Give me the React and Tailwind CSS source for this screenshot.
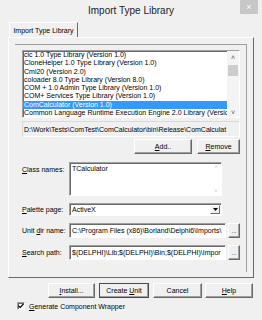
import React from 'react';

const libraries = [
  'cic 1.0 Type Library (Version 1.0)',
  'CloneHelper 1.0 Type Library (Version 1.0)',
  'Cmi20 (Version 2.0)',
  'coloader 8.0 Type Library (Version 8.0)',
  'COM + 1.0 Admin Type Library (Version 1.0)',
  'COM+ Services Type Library (Version 1.0)',
  'ComCalculator (Version 1.0)',
  'Common Language Runtime Execution Engine 2.0 Library (Versio',
];

const raised =
  'border border-t-white border-l-white border-r-[#696969] border-b-[#696969] shadow-[inset_-1px_-1px_0_#a0a0a0] bg-[#f0f0f0]';
const sunken =
  'border border-t-[#a0a0a0] border-l-[#a0a0a0] border-r-white border-b-white shadow-[inset_1px_1px_0_#696969]';

function Button({ className = '', children }) {
  return (
    <button className={`${raised} h-[15px] flex items-center justify-center leading-none ${className}`}>
      {children}
    </button>
  );
}

function Label({ children }) {
  return <div className="w-[47px] shrink-0 leading-none">{children}</div>;
}

export default function App() {
  return (
    <div className="w-[262px] h-[320px] bg-[#f0f0f0] overflow-hidden font-['Liberation_Sans',Arial,sans-serif] text-[7px] text-black">
      {/* Title bar */}
      <div className="relative h-[20px] flex items-center justify-center">
        <span className="text-[10px] text-[#222]">Import Type Library</span>
        <div className="absolute right-[4px] top-0 w-[18px] h-[14px] bg-[#c7c7c7] flex items-center justify-center text-white text-[9px] leading-none">
          ×
        </div>
      </div>

      {/* Tab header */}
      <div className="mt-[2px] pl-[9px] h-[15px] flex">
        <div className="w-[69px] h-full border-l border-t border-r border-l-white border-t-white border-r-[#696969] flex items-center justify-center leading-none">
          Import Type Library
        </div>
      </div>

      {/* Tab panel */}
      <div className="ml-[8px] w-[246px] h-[241px] border border-t-white border-l-white border-r-[#696969] border-b-[#696969]">
        <div className="ml-[6px] mt-[6px] w-[232px] h-[228px] border-t border-r border-[#a0a0a0] pl-[7px] pr-[6px] pt-[5px]">
          {/* Library list */}
          <div className={`${sunken} h-[68px] bg-white flex overflow-hidden`}>
            <div className="flex-1 overflow-hidden">
              {libraries.map((name) => (
                <div
                  key={name}
                  className={`h-[8.25px] leading-[8.25px] pl-[1px] whitespace-nowrap ${
                    name === 'ComCalculator (Version 1.0)' ? 'bg-[#3399ff] text-white' : ''
                  }`}
                >
                  {name}
                </div>
              ))}
            </div>
            <div className="w-[12px] bg-[#f4f4f4] flex flex-col items-center">
              <div className="h-[12px] flex items-center justify-center text-[#555] text-[7px] leading-none">˄</div>
              <div className="mt-[2px] w-[10px] h-[11px] bg-[#cdcdcd]" />
              <div className="flex-1" />
              <div className="h-[10px] flex items-center justify-center text-[#555] text-[7px] leading-none">˅</div>
            </div>
          </div>

          {/* File path */}
          <div className="mt-[3px] h-[16px] border border-[#d9d9d9] border-b-white border-r-white flex items-center pl-[1px] whitespace-nowrap overflow-hidden leading-none">
            D:\Work\Tests\ComTest\ComCalculator\bin\Release\ComCalculat
          </div>

          {/* Add / Remove */}
          <div className="mt-[2px] flex justify-end gap-[5px]">
            <Button className="w-[58px]"><span><u>A</u>dd..</span></Button>
            <Button className="w-[43px]"><span><u>R</u>emove</span></Button>
          </div>

          {/* Class names */}
          <div className="mt-[8px] flex">
            <div className="pt-[4px]"><Label><u>C</u>lass names:</Label></div>
            <div className={`${sunken} w-[153px] h-[34px] bg-white flex`}>
              <div className="flex-1 pl-[2px] pt-[2px] leading-none">TCalculator</div>
              <div className="w-[10px] flex flex-col justify-between items-center text-[#c0c0c0] text-[6px] leading-none py-[1px]">
                <span>˄</span>
                <span>˅</span>
              </div>
            </div>
          </div>

          {/* Palette page */}
          <div className="mt-[7px] flex items-center">
            <Label><u>P</u>alette page:</Label>
            <div className={`${sunken} w-[153px] h-[13px] bg-white flex items-center`}>
              <div className="flex-1 pl-[2px] leading-none">ActiveX</div>
              <div className="w-[10px] h-[9px] mr-[1px] border border-t-white border-l-white border-r-[#696969] border-b-[#696969] bg-[#f0f0f0] flex items-center justify-center">
                <svg width="5" height="3" viewBox="0 0 5 3">
                  <path d="M0 0H5L2.5 3Z" fill="#000" />
                </svg>
              </div>
            </div>
          </div>

          {/* Unit dir name */}
          <div className="mt-[7px] flex items-center">
            <Label>Unit <u>d</u>ir name:</Label>
            <div className={`${sunken} w-[157px] h-[15px] bg-white flex items-center pl-[2px] whitespace-nowrap overflow-hidden leading-none`}>
              C:\Program Files (x86)\Borland\Delphi6\Imports\
            </div>
            <Button className="ml-[2px] w-[12px] text-[6px]">...</Button>
          </div>

          {/* Search path */}
          <div className="mt-[7px] flex items-center">
            <Label><u>S</u>earch path:</Label>
            <div className={`${sunken} w-[157px] h-[15px] bg-white flex items-center pl-[2px] whitespace-nowrap overflow-hidden leading-none`}>
              $(DELPHI)\Lib;$(DELPHI)\Bin;$(DELPHI)\Impor
            </div>
            <Button className="ml-[2px] w-[12px] text-[6px]">...</Button>
          </div>
        </div>
      </div>

      {/* Dialog buttons */}
      <div className="mt-[5px] pl-[48px] flex">
        <Button className="w-[47px]"><span><u>I</u>nstall...</span></Button>
        <Button className="ml-[4px] w-[50px] outline outline-1 outline-[#4a4a4a] -outline-offset-1"><span>Create <u>U</u>nit</span></Button>
        <Button className="ml-[4px] w-[49px]">Cancel</Button>
        <Button className="ml-[3px] w-[48px]"><span><u>H</u>elp</span></Button>
      </div>

      {/* Checkbox */}
      <div className="mt-[4px] pl-[17px] flex items-center">
        <div className={`${sunken} w-[8px] h-[8px] bg-white flex items-center justify-center`}>
          <svg width="6" height="6" viewBox="0 0 6 6">
            <path d="M0.5 2.8L2.2 4.5L5.5 1" stroke="#000" strokeWidth="1.2" fill="none" />
          </svg>
        </div>
        <span className="ml-[4px] leading-none"><u>G</u>enerate Component Wrapper</span>
      </div>
    </div>
  );
}
